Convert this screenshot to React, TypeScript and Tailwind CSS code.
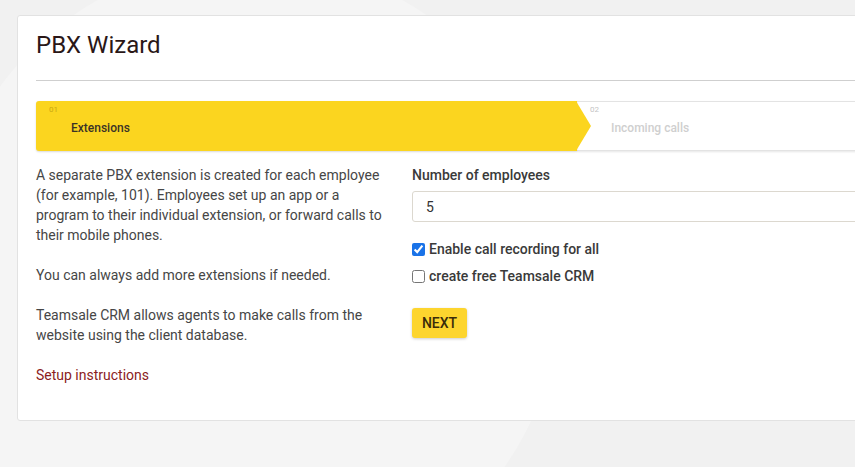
import { useState } from 'react';

const steps = [
  { num: '01', label: 'Extensions', active: true },
  { num: '02', label: 'Incoming calls', active: false },
];

const Stepper = () => {
  return (
    <div className="mt-5 flex h-[50px]">
      <div className="relative flex w-[541px] shrink-0 flex-col rounded-l-[3px] bg-[#fbd51f] pl-[13px] shadow-[0_1px_2px_rgba(0,0,0,0.15)]">
        <span className="mt-[4px] text-[8px] leading-[10px] text-[#c9a812]">{steps[0].num}</span>
        <span className="ml-[22px] mt-[6px] text-[12px] font-medium leading-[14px] text-[#3b3326]">
          {steps[0].label}
        </span>
        <svg
          className="absolute right-[-15px] top-0 z-10"
          width="16"
          height="50"
          viewBox="0 0 16 50"
        >
          <polygon points="0,0 15,25 0,50" fill="#fbd51f" />
        </svg>
      </div>
      <div className="flex flex-1 flex-col border-y border-[#e3e3e3] bg-white pl-[13px] shadow-[0_1px_2px_rgba(0,0,0,0.1)]">
        <span className="mt-[3px] text-[8px] leading-[10px] text-[#c4c4c4]">{steps[1].num}</span>
        <span className="ml-[21px] mt-[6px] text-[12px] font-medium leading-[14px] text-[#cfcfcf]">
          {steps[1].label}
        </span>
      </div>
    </div>
  );
};

const App = () => {
  const [employees, setEmployees] = useState('5');
  const [recording, setRecording] = useState(true);
  const [crm, setCrm] = useState(false);

  return (
    <div
      className="relative h-[467px] w-[855px] overflow-hidden bg-[#f1f1f1] pl-[17px] pt-[15px]"
      style={{ fontFamily: 'Roboto, "Noto Sans", sans-serif' }}
    >
      <div className="pointer-events-none absolute left-[-60px] top-[-40px] h-[640px] w-[620px] rounded-full bg-[#f5f5f5]" />
      <div className="relative h-[406px] w-[900px] rounded-[3px] border border-[#e2e2e2] bg-white pl-[18px] pt-[13px]">
        <h1 className="text-[24px] leading-[32px] text-[#2a1717]">PBX Wizard</h1>
        <div className="mt-[19px] h-px bg-[#cfcfcf]" />

        <Stepper />

        <div className="mt-[14px] flex">
          <div className="w-[376px] shrink-0 text-[14px] leading-[20px] text-[#464646]">
            <p className="w-[350px]">
              A separate PBX extension is created for each employee (for example, 101). Employees set up an app or a
              program to their individual extension, or forward calls to their mobile phones.
            </p>
            <p className="mt-5">You can always add more extensions if needed.</p>
            <p className="mt-5 w-[340px]">
              Teamsale CRM allows agents to make calls from the website using the client database.
            </p>
            <a href="#" className="mt-5 block text-[#8b1c22]">
              Setup instructions
            </a>
          </div>

          <div className="flex-1">
            <label className="block text-[14px] font-medium leading-[20px] text-[#3a3a3a]">
              Number of employees
            </label>
            <input
              value={employees}
              onChange={(e) => setEmployees(e.target.value)}
              className="mt-[6px] h-[31px] w-full rounded-[3px] border border-[#dcd8cf] px-[13px] text-[14px] text-[#333] outline-none"
            />
            <label className="mt-[17px] flex items-center gap-[4px] text-[14px] font-medium leading-[20px] text-[#3a3a3a]">
              <input
                type="checkbox"
                checked={recording}
                onChange={() => setRecording(!recording)}
                className="m-0 h-[13px] w-[13px] accent-[#1a73e8]"
              />
              Enable call recording for all
            </label>
            <label className="mt-[7px] flex items-center gap-[4px] text-[14px] font-medium leading-[20px] text-[#3a3a3a]">
              <input
                type="checkbox"
                checked={crm}
                onChange={() => setCrm(!crm)}
                className="m-0 h-[13px] w-[13px]"
              />
              create free Teamsale CRM
            </label>
            <button className="mt-[22px] h-[30px] w-[55px] rounded-[3px] bg-[#fdd52e] text-[14px] font-medium text-[#3a2c0a] shadow-[0_1px_3px_rgba(0,0,0,0.2)]">
              NEXT
            </button>
          </div>
        </div>
      </div>
    </div>
  );
};

export default App;
